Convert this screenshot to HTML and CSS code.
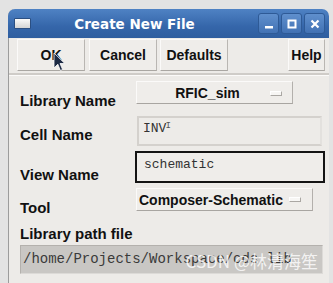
FILE: index.html
```html
<!DOCTYPE html>
<html lang="en">

<head>
  <meta charset="UTF-8">
  <title>Create New File</title>
  <link rel="stylesheet" href="styles.css">
</head>

<body>
  <div class="window">

    <div class="titlebar">
      <span class="win-icon"></span>
      <span class="title">Create New File</span>
      <div class="win-buttons">
        <span class="wbtn">
          <svg width="12" height="12" viewBox="0 0 12 12"><rect x="2" y="8" width="8" height="2.5" fill="#fff"/></svg>
        </span>
        <span class="wbtn">
          <svg width="12" height="12" viewBox="0 0 12 12"><rect x="2.5" y="2.5" width="7" height="7" fill="none" stroke="#fff" stroke-width="2"/></svg>
        </span>
        <span class="wbtn">
          <svg width="12" height="12" viewBox="0 0 12 12"><path d="M2.5 2.5 L9.5 9.5 M9.5 2.5 L2.5 9.5" stroke="#fff" stroke-width="2.2"/></svg>
        </span>
      </div>
    </div>

    <div class="toolbar">
      <button class="btn ok">OK
        <svg class="cursor" width="13" height="20" viewBox="0 0 13 20">
          <path d="M1 1 L1 16 L4.8 12.2 L7.4 18.5 L9.6 17.5 L7 11.5 L11.8 11.5 Z" fill="#1d2a44" stroke="#fff" stroke-width="0.8"/>
        </svg>
      </button>
      <button class="btn">Cancel</button>
      <button class="btn">Defaults</button>
      <button class="btn help">Help</button>
    </div>

    <div class="form">
      <div class="row row-lib">
        <div class="label">Library Name</div>
        <div class="option lib-option">RFIC_sim <span class="indicator"></span></div>
      </div>
      <div class="row row-cell">
        <div class="label">Cell Name</div>
        <div class="field cell-field">INV<span class="caret">Ι</span></div>
      </div>
      <div class="row row-view">
        <div class="label">View Name</div>
        <div class="field view-field">schematic</div>
      </div>
      <div class="row row-tool">
        <div class="label">Tool</div>
        <div class="option tool-option">Composer-Schematic <span class="indicator"></span></div>
      </div>
      <div class="label path-label">Library path file</div>
      <div class="path-field">
        <span class="path-text">/home/Projects/Workspace/cds.lib</span>
        <span class="watermark">CSDN @林清海笙</span>
      </div>
    </div>

  </div>
</body>

</html>
```

FILE: styles.css
```css
body {
  margin: 0;
  background: #e3e3e3;
  font-family: "Liberation Sans", Arial, sans-serif;
  overflow: hidden;
}

.window {
  margin: 9px 4px 0 8px;
  height: 274px;
  background: #edebe8;
  border-left: 1px solid #9c9c9c;
  border-radius: 7px 7px 0 0;
}

.titlebar {
  height: 29px;
  display: flex;
  align-items: center;
  padding: 0 4px 0 6px;
  background: linear-gradient(to bottom, #4f82c4, #3566aa 60%, #2f5e9f);
  border-radius: 7px 7px 0 0;
  margin-left: -1px;
}

.win-icon {
  width: 15px;
  height: 9px;
  border: 1px solid #2b4f82;
  background: linear-gradient(#fafafa, #d4d4d4);
  border-radius: 1px;
}

.title {
  flex: 1;
  text-align: center;
  color: #fff;
  font-family: "DejaVu Sans", sans-serif;
  font-weight: bold;
  font-size: 13.5px;
  padding-right: 20px;
}

.win-buttons {
  display: flex;
  gap: 2px;
}

.wbtn {
  width: 19px;
  height: 19px;
  display: flex;
  align-items: center;
  justify-content: center;
  border: 1px solid #2e5a96;
  border-radius: 3px;
  background: linear-gradient(#5f8fcd, #4272b4);
}

.toolbar {
  display: flex;
  gap: 3px;
  padding: 1px 4px 2px 8px;
  border-bottom: 2px solid #cfccc8;
  box-shadow: 0 1px 0 #fbfaf9;
}

.btn {
  position: relative;
  height: 32px;
  width: 68px;
  background: #efedea;
  border: 1px solid;
  border-color: #fbfaf9 #b9b6b2 #aaa7a3 #fbfaf9;
  font-family: "Liberation Sans", Arial, sans-serif;
  font-weight: bold;
  font-size: 14px;
  color: #111;
  padding: 0;
}

.btn.ok {
  margin-right: 1px;
}

.btn.help {
  width: 37px;
  margin-left: auto;
}

.cursor {
  position: absolute;
  left: 35px;
  top: 12px;
}

.form {
  padding: 0 0 0 11px;
}

.row {
  display: flex;
  align-items: flex-start;
}

.label {
  width: 116px;
  font-weight: bold;
  font-size: 15px;
  line-height: 16px;
  color: #111;
}

.row-lib {
  margin-top: 6px;
}

.row-lib .label {
  padding-top: 12px;
}

.row-cell {
  margin-top: 7px;
}

.row-cell .label {
  padding-top: 11px;
}

.row-view {
  margin-top: 5px;
}

.row-view .label {
  padding-top: 16px;
}

.row-tool {
  margin-top: 5px;
}

.row-tool .label {
  padding-top: 12px;
}

.option {
  display: flex;
  align-items: center;
  background: #efedea;
  border: 1px solid;
  border-color: #fbfaf9 #b3b0ac #a8a5a1 #fbfaf9;
  font-weight: bold;
  font-size: 14px;
  color: #111;
  box-sizing: border-box;
}

.lib-option {
  width: 157px;
  height: 23px;
  justify-content: center;
  position: relative;
  padding-right: 14px;
}

.lib-option .indicator {
  position: absolute;
  right: 10px;
  top: 9px;
}

.tool-option {
  width: 177px;
  height: 23px;
  padding-left: 2px;
  gap: 6px;
}

.indicator {
  width: 10px;
  height: 3px;
  background: #f7f6f4;
  border: 1px solid;
  border-color: #fff #aaa7a3 #aaa7a3 #fff;
}

.field {
  box-sizing: border-box;
  font-family: "Liberation Mono", "Courier New", monospace;
  font-size: 13px;
  color: #333;
}

.cell-field {
  margin-left: 1px;
  width: 185px;
  height: 30px;
  border: 2px solid #d4d1cd;
  border-right-color: #e3e1de;
  padding: 3px 0 0 4px;
  background: #edebe8;
}

.caret {
  font-size: 9px;
  color: #555;
  vertical-align: top;
  margin-left: -1px;
}

.view-field {
  margin-left: -1px;
  width: 190px;
  height: 32px;
  border: 2px solid #141414;
  padding: 4px 0 0 7px;
  background: #efedea;
}

.path-label {
  width: auto;
  margin-top: 10px;
}

.path-field {
  position: relative;
  box-sizing: border-box;
  margin-top: 3px;
  width: 303px;
  height: 29px;
  background: #c9c7c4;
  border: 1px solid #b4b1ad;
  border-color: #b4b1ad #dcdad7 #dcdad7 #b4b1ad;
  padding: 5px 0 0 2px;
  font-family: "Liberation Mono", "Courier New", monospace;
  font-size: 14px;
  color: #3a3a3a;
  white-space: nowrap;
  overflow: hidden;
}

.watermark {
  position: absolute;
  right: 4px;
  top: 2px;
  font-family: "Noto Sans CJK SC", "Noto Sans", sans-serif;
  font-size: 17px;
  color: rgba(255, 255, 255, 0.8);
}
```
